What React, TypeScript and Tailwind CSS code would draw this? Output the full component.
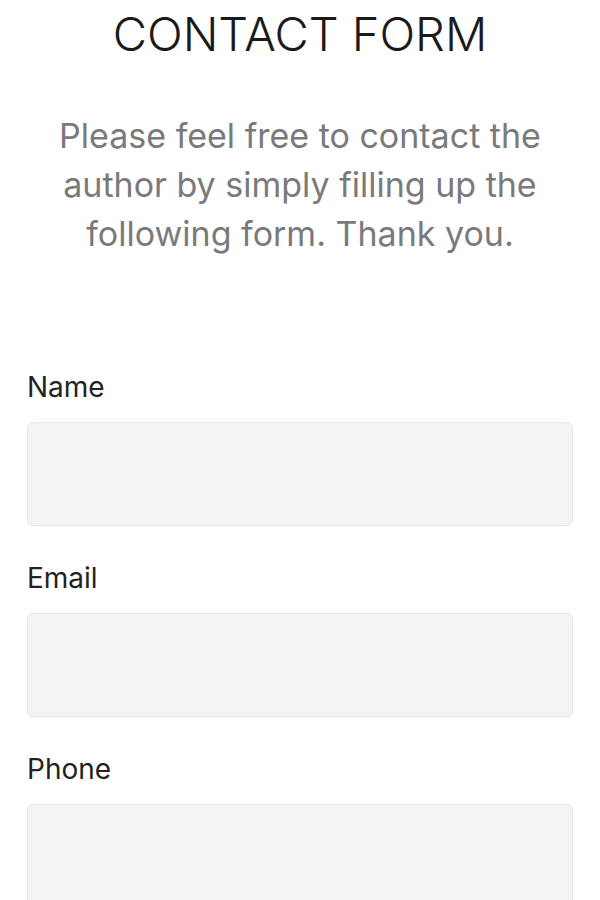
export default function App() {
  const fields = ["Name", "Email", "Phone"];

  return (
    <div className="min-h-screen bg-white px-[27px] font-['Inter',sans-serif]">
      <h1 className="pt-[4px] text-center text-[47px] font-light leading-[60px] text-[#1a1a1a]">
        CONTACT FORM
      </h1>
      <p className="mx-auto mt-[47px] max-w-[520px] text-center text-[34px] leading-[49px] text-[#7a7a7a]">
        Please feel free to contact the author by simply filling up the following form. Thank you.
      </p>

      <form className="mt-[113px] flex flex-col gap-[36px]">
        {fields.map((f) => (
          <div key={f} className="flex flex-col">
            <label className="text-[28px] leading-[32px] text-[#222222]">{f}</label>
            <input
              type="text"
              className="mt-[19px] h-[104px] w-full rounded-[6px] border border-[#e6e6e6] bg-[#f4f4f4] px-4 text-[24px] outline-none"
            />
          </div>
        ))}
      </form>
    </div>
  );
}
